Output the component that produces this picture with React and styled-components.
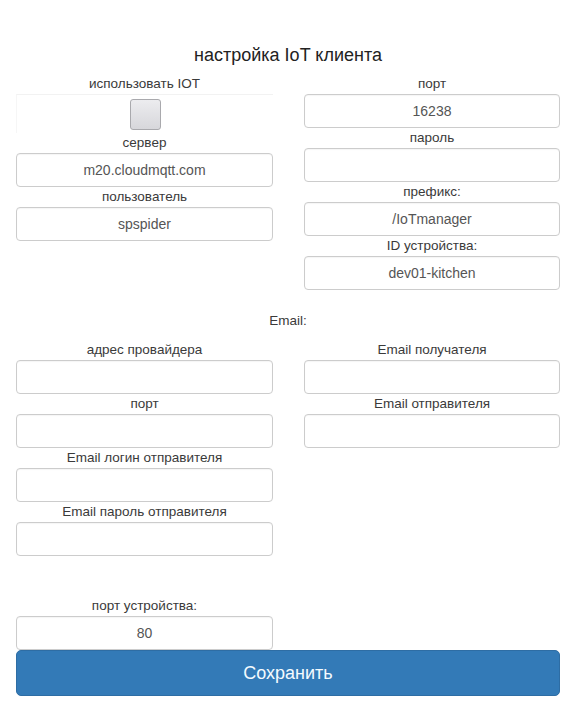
import React from 'react';
import styled, { createGlobalStyle } from 'styled-components';

const Global = createGlobalStyle`
  body {
    margin: 0;
    background: #fff;
    font-family: "Liberation Sans", Arial, sans-serif;
    color: #333;
  }
`;

const Page = styled.div`
  width: 581px;
  padding: 42px 21px 0 16px;
  box-sizing: border-box;
`;

const Title = styled.h2`
  margin: 0 0 6px 0;
  font-size: 18px;
  font-weight: normal;
  line-height: 26px;
  text-align: center;
  color: #222;
`;

const Columns = styled.div`
  display: grid;
  grid-template-columns: 257px 256px;
  column-gap: 31px;
  align-items: start;
`;

const Column = styled.div`
  display: flex;
  flex-direction: column;
`;

const Label = styled.div`
  height: 20px;
  line-height: 20px;
  font-size: 13.5px;
  text-align: center;
  color: #3a3a3a;
`;

const Input = styled.input`
  box-sizing: border-box;
  width: 100%;
  height: 34px;
  margin: 0;
  border: 1px solid #ccc;
  border-radius: 4px;
  background: #fff;
  box-shadow: inset 0 1px 1px rgba(0, 0, 0, 0.04);
  font-family: "Liberation Sans", Arial, sans-serif;
  font-size: 14px;
  color: #555;
  text-align: center;
  outline: none;
`;

const CheckWrap = styled.div`
  height: 39px;
  display: flex;
  justify-content: center;
  align-items: flex-start;
  padding-top: 4px;
  box-sizing: border-box;
  border-top: 1px solid #f2f2f2;
  border-left: 1px solid #f6f6f6;
`;

const CheckBox = styled.div`
  width: 31px;
  height: 31px;
  box-sizing: border-box;
  border: 1px solid #a9a9ad;
  border-radius: 3px;
  background: linear-gradient(#ececef, #d7d7db);
`;

const Section = styled.div`
  margin: ${(p) => p.$top || 0}px 0 ${(p) => p.$bottom || 0}px 0;
  font-size: 13.5px;
  line-height: 20px;
  text-align: center;
  color: #3a3a3a;
`;

const Save = styled.button`
  width: 100%;
  height: 46px;
  border: 1px solid #2e6da4;
  border-radius: 5px;
  background: #337ab7;
  color: #f4fbff;
  font-family: "Liberation Sans", Arial, sans-serif;
  font-size: 18px;
  cursor: pointer;
`;

const Spacer = styled.div`
  height: ${(p) => p.$h}px;
`;

const Field = ({ label, value }) => (
  <>
    <Label>{label}</Label>
    <Input defaultValue={value} />
  </>
);

export default function App() {
  return (
    <Page>
      <Global />
      <Title>настройка IoT клиента</Title>
      <Columns>
        <Column>
          <Label>использовать IOT</Label>
          <CheckWrap>
            <CheckBox />
          </CheckWrap>
          <Field label="сервер" value="m20.cloudmqtt.com" />
          <Field label="пользователь" value="spspider" />
        </Column>
        <Column>
          <Field label="порт" value="16238" />
          <Field label="пароль" value="" />
          <Field label="префикс:" value="/IoTmanager" />
          <Field label="ID устройства:" value="dev01-kitchen" />
        </Column>
      </Columns>
      <Section $top={21} $bottom={9}>Email:</Section>
      <Columns>
        <Column>
          <Field label="адрес провайдера" value="" />
          <Field label="порт" value="" />
          <Field label="Email логин отправителя" value="" />
          <Field label="Email пароль отправителя" value="" />
          <Spacer $h={40} />
          <Field label="порт устройства:" value="80" />
        </Column>
        <Column>
          <Field label="Email получателя" value="" />
          <Field label="Email отправителя" value="" />
        </Column>
      </Columns>
      <Save>Сохранить</Save>
    </Page>
  );
}
